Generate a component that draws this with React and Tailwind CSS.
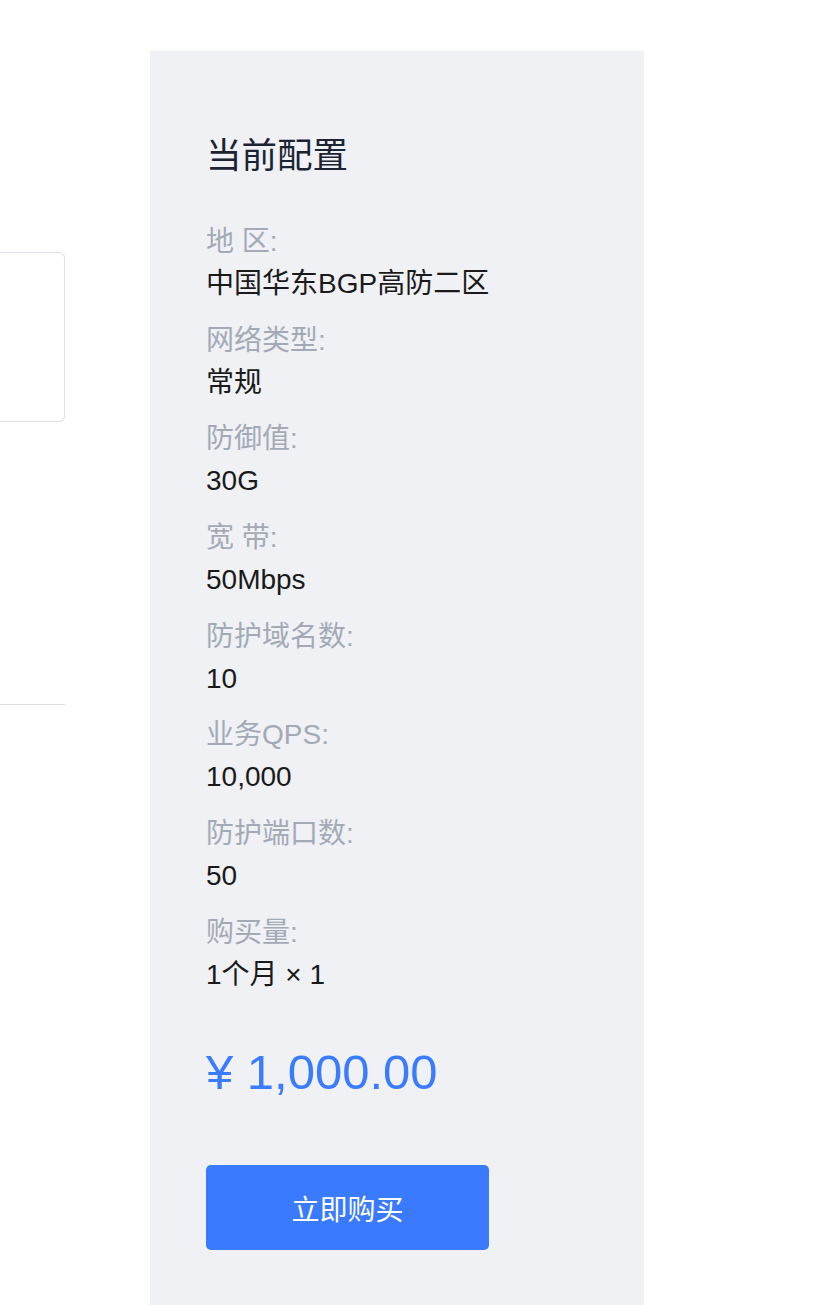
export default function App() {
  const items = [
    ["地 区:", "中国华东BGP高防二区"],
    ["网络类型:", "常规"],
    ["防御值:", "30G"],
    ["宽 带:", "50Mbps"],
    ["防护域名数:", "10"],
    ["业务QPS:", "10,000"],
    ["防护端口数:", "50"],
    ["购买量:", "1个月 × 1"],
  ];
  return (
    <div
      className="flex w-[814px] h-[1305px] overflow-hidden bg-white"
      style={{ fontFamily: '"Liberation Sans", "Noto Sans CJK SC", sans-serif' }}
    >
      <div className="w-[65px] shrink-0 pt-[252px]">
        <div className="h-[170px] border border-l-0 border-[#dcdfe6] rounded-r-[6px]"></div>
        <div className="mt-[282px] h-px bg-[#dcdfe6]"></div>
      </div>
      <div className="ml-[85px] mt-[51px] w-[494px] h-[1254px] shrink-0 bg-[#eff1f5] pl-[56px] pt-[78px]">
        <div className="text-[35.5px] leading-[54px] text-[#1c2333]">当前配置</div>
        <div className="mt-[38px]">
          {items.map(([k, v]) => (
            <div key={k} className="mb-[14.7px]">
              <div className="text-[28px] leading-[42px] text-[#a3aab5]">{k}</div>
              <div className="text-[28px] leading-[42px] text-[#1a1a1a]">{v}</div>
            </div>
          ))}
        </div>
        <div className="mt-[40px] text-[49px] leading-[72px] text-[#3b7bfd]">¥ 1,000.00</div>
        <button className="mt-[57px] w-[283px] h-[85px] pt-[7px] rounded-[5px] bg-[#3a7afe] text-white text-[28px] flex items-center justify-center">
          立即购买
        </button>
      </div>
    </div>
  );
}
